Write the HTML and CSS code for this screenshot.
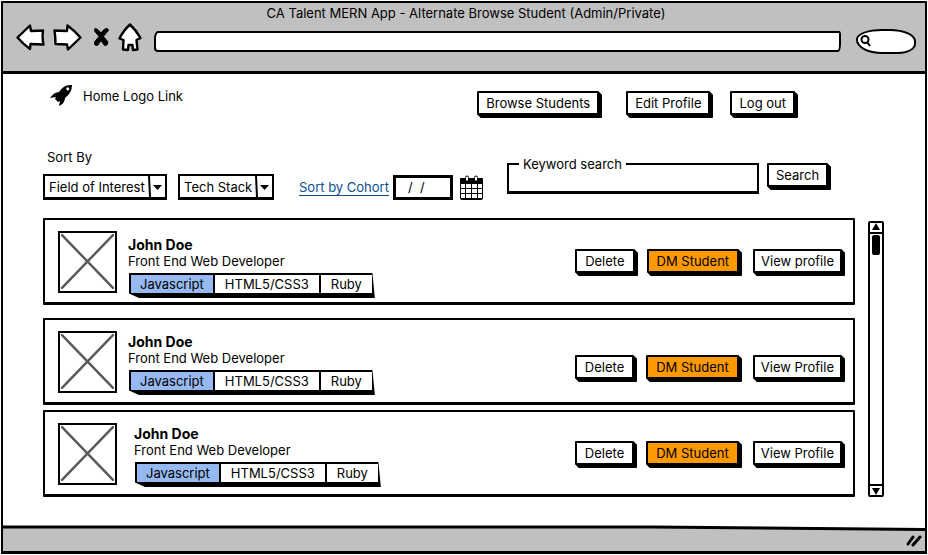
FILE: index.html
```html
<!DOCTYPE html>
<html lang="en">
<head>
<meta charset="utf-8">
<meta name="viewport" content="width=device-width, initial-scale=1">
<title>CA Talent MERN App</title>
<link rel="stylesheet" href="styles.css">
</head>
<body>
<svg class="defs" aria-hidden="true">
  <symbol id="placeholder" viewBox="0 0 54 57" preserveAspectRatio="none">
    <path d="M2 2 52 54M52 2 2 54" fill="none" stroke="#595959" stroke-width="2.4" stroke-linecap="round"/>
  </symbol>
</svg>
<div class="window">
  <header class="chrome">
    <h1 class="title">CA Talent MERN App - Alternate Browse Student (Admin/Private)</h1>
    <div class="toolbar">
      <button class="tool" aria-label="Back"><svg width="29" height="27" viewBox="0 0 29 27"><path d="M1.5 13.5 14 1.5 15 7 27 6.500Q26 14 27.500 20.500L14.500 20 14 25Q7 20 1.500 13.500Z"/></svg></button>
      <button class="tool tool-forward" aria-label="Forward"><svg width="29" height="27" viewBox="0 0 29 27"><path d="M1.500 6.500 14 7 14.500 1.500Q22 7 27.500 13.500L15 25.500 14 20.500 2.500 20Q2.500 13 1.500 6.500Z"/></svg></button>
      <button class="tool tool-stop" aria-label="Stop"><svg width="17" height="20" viewBox="0 0 17 20"><path class="solid" d="M2 1.500Q5 1.500 8 6 11 1 14.500 1.500L15.500 3.500Q13 6 10.500 9.500L15 15 14 18 11.500 18.500 8 13.500 5 18Q3 19 1.500 17.500L1.500 15 6 9.500 1.500 4Z"/></svg></button>
      <button class="tool tool-home" aria-label="Home"><svg width="24" height="29" viewBox="0 0 24 29"><path d="M12 1.500Q18 7 22.500 15L18.500 17 19.500 26.500 15 27 14.500 22 10.500 22 10 27 5 26.500 5.500 17 1.500 15.500Q5 8 12 1.500Z"/></svg></button>
      <input class="address" type="text" aria-label="Address">
      <div class="lookup">
        <svg width="11" height="12" viewBox="0 0 11 12" aria-hidden="true"><circle cx="5" cy="4.500" r="3.500"/><path d="m7 7 3 4"/></svg>
        <input type="text" aria-label="Web search">
      </div>
    </div>
  </header>

  <main class="page">
    <nav class="nav">
      <a class="logo" href="#">
        <svg width="23" height="23" viewBox="0 0 23 23" aria-hidden="true"><path fill-rule="evenodd" d="M22 1Q14 0 9 8 4 8 0 14L6 13 5 15 8 18 10 17 9 22Q15 19 15 14 22 9 22 1ZM19 4A1.500 1.500 0 1 1 16.500 5.800 1.500 1.500 0 0 1 19 4Z"/></svg>
        <span>Home Logo Link</span>
      </a>
      <div class="nav-actions">
        <button class="btn">Browse Students</button>
        <span class="account"><button class="btn">Edit Profile</button><button class="btn">Log out</button></span>
      </div>
    </nav>

    <form class="filters">
      <div class="sort">
        <span class="sort-label" id="sort">Sort By</span>
        <div class="sort-row">
          <div class="drop"><select class="drop-interest" aria-labelledby="sort"><option>Field of Interest</option></select><svg width="17" height="21" viewBox="0 0 17 21" aria-hidden="true"><path class="rule" d="M1 0 2 21"/><path d="M5 9H14L9.500 14Z"/></svg></div>
          <div class="drop"><select class="drop-stack" aria-labelledby="sort"><option>Tech Stack</option></select><svg width="17" height="21" viewBox="0 0 17 21" aria-hidden="true"><path class="rule" d="M1 0 2 21"/><path d="M5 9H14L9.500 14Z"/></svg></div>
          <a class="cohort" href="#">Sort by Cohort</a>
          <input class="date" type="text" value="/  /" aria-label="Cohort date">
          <svg class="calendar" width="23" height="25" viewBox="0 0 23 25" aria-hidden="true"><path d="M0 4Q0 3 1 3H22Q23 3 23 4V23Q23 25 21 25H2Q0 25 0 23Z"/><path class="cells" d="M1 9H5V13H1ZM6 9H11V13H6ZM12 9H17V13H12ZM18 9H22V13H18ZM1 14H5V18H1ZM6 14H11V18H6ZM12 14H17V18H12ZM18 14H22V18H18ZM1 19H5V23H1ZM6 19H11V23H6ZM12 19H17V23H12ZM18 19H22V23H18Z"/><path class="ring" d="M5.500 6V2.500a1.500 1.500 0 0 1 3 0V6ZM14.500 6V2.500a1.500 1.500 0 0 1 3 0V6Z"/></svg>
        </div>
      </div>
      <fieldset class="keyword">
        <legend><label for="keyword">Keyword search</label></legend>
        <input id="keyword" type="text">
      </fieldset>
      <button class="btn" type="button">Search</button>
    </form>

    <div class="results">
      <div class="list">
        <article class="card card-first">
          <svg class="photo" role="img" aria-label="Photo"><use href="#placeholder"/></svg>
          <div class="info">
            <h2>John Doe</h2>
            <p>Front End Web Developer</p>
            <ul class="tags"><li class="on">Javascript</li><li>HTML5/CSS3</li><li>Ruby</li></ul>
          </div>
          <div class="actions"><button class="btn">Delete</button><button class="btn btn-dm">DM Student</button><button class="btn btn-view">View profile</button></div>
        </article>
        <article class="card card-second">
          <svg class="photo" role="img" aria-label="Photo"><use href="#placeholder"/></svg>
          <div class="info">
            <h2>John Doe</h2>
            <p>Front End Web Developer</p>
            <ul class="tags"><li class="on">Javascript</li><li>HTML5/CSS3</li><li>Ruby</li></ul>
          </div>
          <div class="actions"><button class="btn">Delete</button><button class="btn btn-dm">DM Student</button><button class="btn btn-view">View Profile</button></div>
        </article>
        <article class="card card-third">
          <svg class="photo" role="img" aria-label="Photo"><use href="#placeholder"/></svg>
          <div class="info">
            <h2>John Doe</h2>
            <p>Front End Web Developer</p>
            <ul class="tags"><li class="on">Javascript</li><li>HTML5/CSS3</li><li>Ruby</li></ul>
          </div>
          <div class="actions"><button class="btn">Delete</button><button class="btn btn-dm">DM Student</button><button class="btn btn-view">View Profile</button></div>
        </article>
      </div>
      <div class="scroll" aria-hidden="true">
        <svg class="up" width="12" height="9" viewBox="0 0 12 9"><path d="M6 0 10 7H2Z"/></svg>
        <span class="thumb"></span>
        <svg class="down" width="12" height="9" viewBox="0 0 12 9"><path d="M2 2H10L6 9Z"/></svg>
      </div>
    </div>
  </main>

  <footer class="status">
    <svg class="edge" viewBox="0 0 922 6" preserveAspectRatio="none" aria-hidden="true"><path class="above" d="M0 0H922V5L650 2 0 1Z"/><path class="line" d="M0 2 650 2 922 4.500"/></svg>
    <svg class="grip" width="18" height="14" viewBox="0 0 18 14" aria-hidden="true"><path d="M3 11 8 4M8 12 15 4"/></svg>
  </footer>
</div>
</body>
</html>
```
FILE: styles.css
```css
* { box-sizing: border-box; }

body {
  margin: 0;
  padding: 1px;
  background: #fff;
  color: #000;
  font: 13px/16px Inter, "Liberation Sans", sans-serif;
}

button, input, select { font: inherit; color: inherit; }
h1, h2, p, ul { margin: 0; padding: 0; font-size: inherit; }
svg { display: block; }
.defs { position: absolute; width: 0; height: 0; }

.window {
  display: flex;
  flex-direction: column;
  min-height: calc(100vh - 2px);
  border: 2px solid #000;
  border-bottom-width: 3px;
}

/* Browser frame */
.chrome {
  padding: 2px 9px 18px 13px;
  background: #c0c0c0;
  border-bottom: 3px solid #000;
}
.title { font-weight: 400; text-align: center; }
.toolbar { display: flex; align-items: center; height: 32px; }
.tool { padding: 0; border: 0; background: none; }
.tool path { fill: #fff; stroke: #000; stroke-width: 2.4; stroke-linejoin: round; }
.tool .solid { fill: #000; stroke-width: 1; }
.tool-forward { margin-left: 8px; }
.tool-stop { margin-left: 11px; }
.tool-home { margin: 0 12px 0 8px; }
.address {
  flex: 1;
  min-width: 0;
  height: 21px;
  margin-top: 8px;
  border: 2px solid #000;
  border-radius: 4px 2px 3px 4px / 8px 4px 8px 4px;
  background: #fff;
}
.lookup {
  display: flex;
  align-items: center;
  width: 60px;
  height: 25px;
  margin: 8px 0 0 15px;
  padding-left: 2px;
  border: 2px solid #000;
  border-radius: 26px 26px 18px 26px / 10px 12px 10px 14px;
  background: #fff;
}
.lookup svg { flex: none; fill: none; stroke: #000; stroke-width: 2; }
.lookup input { width: 100%; min-width: 0; border: 0; padding: 0; background: none; }

/* Page */
.page { flex: 1; padding: 17px 41px 26px 40px; }
.btn {
  height: 24px;
  padding: 0 8px;
  border: 2px solid #000;
  border-radius: 1px;
  background: #fff;
  box-shadow: 1px 1px #000, 2px 2px #000, 3px 3px #000;
  line-height: 18px;
  white-space: nowrap;
}

.nav { display: flex; justify-content: space-between; align-items: flex-start; padding-right: 89px; }
.nav .btn { padding: 0 7px; }
.logo {
  display: flex;
  align-items: center;
  gap: 10px;
  margin: -7px 0 0 7px;
  color: inherit;
  text-decoration: none;
}
.nav-actions { display: flex; gap: 27px; }
.account { display: flex; gap: 20px; }

.filters { display: flex; align-items: flex-start; margin-top: 34px; }
.sort-label { display: block; padding-left: 4px; }
.sort-row { display: flex; align-items: center; margin-top: 9px; }
.drop { display: grid; align-items: stretch; margin-right: 11px; border: 2px solid #000; border-width: 2px 2px 3px; }
.drop select, .drop svg { grid-area: 1 / 1; }
.drop svg { justify-self: end; pointer-events: none; }
.drop .rule { stroke: #000; stroke-width: 2; }
.drop select { height: 21px; padding: 0 0 0 4px; border: 0; appearance: none; background: #fff; }
.drop-interest { width: 120px; }
.drop-stack { width: 92px; }
.cohort { margin: 0 4px 0 14px; border-bottom: 1px solid #0b4f91; color: #0b4f91; text-decoration: none; }
.date { width: 60px; height: 25px; padding: 0 0 0 12px; border: 3px solid #000; white-space: pre; }
.calendar { margin-left: 7px; }
.cells, .ring { fill: #fff; }
.ring { stroke: #000; stroke-width: 1; }

.keyword {
  flex: none;
  width: 252px;
  min-width: 0;
  margin: 7px 8px 0 24px;
  padding: 0 2px;
  border: 2px solid #000;
  border-bottom-width: 3px;
}
.keyword legend { margin-left: 8px; padding: 0 4px; }
.keyword input { width: 100%; height: 19px; padding: 0; border: 0; background: none; }
.filters > .btn { margin-top: 14px; padding: 0 7px; }

/* Students */
.results { display: flex; gap: 13px; margin-top: 18px; }
.list { flex: 1; min-width: 0; }
.card {
  display: flex;
  align-items: flex-start;
  height: 87px;
  padding: 11px 11px 0 13px;
  border: solid #000;
  border-width: 2px 2px 3px;
  border-radius: 1px;
}
.card-second { margin-top: 13px; }
.card-third { margin-top: 5px; }
.photo { flex: none; width: 59px; height: 62px; border: 2px solid #000; }
.info { margin: 3px 0 0 11px; }
.card-first .info { margin-top: 6px; }
.card-third .info { margin-left: 17px; }
.info h2 { font-size: 14px; font-weight: 700; }
.tags {
  display: flex;
  width: max-content;
  height: 25px;
  margin: 4px 0 0 1px;
  border: solid #000;
  border-width: 2px 3px 5px 2px;
  clip-path: polygon(0 0, 99% 0, 100% 100%, 10px 100%, 0 82%);
  line-height: 18px;
  list-style: none;
}
.tags li { padding: 0 9px; }
.tags li + li { padding: 0 10px; border-left: 2px solid #000; }
.tags .on { background: #96b9f1; }
.actions { display: flex; margin: 18px 0 0 auto; }
.card-second .actions { margin-top: 24px; }
.card-third .actions { margin-top: 18px; }
.btn-dm { margin: 0 14px 0 12px; background: #ff9900; }
.btn-view { padding: 0 6px; }

.scroll {
  display: flex;
  flex-direction: column;
  align-items: center;
  width: 16px;
  margin-top: 3px;
  border: 2px solid #000;
  border-radius: 2px;
}
.up { border-bottom: 2px solid #000; width: 12px; height: 11px; }
.down { border-top: 2px solid #000; width: 12px; height: 11px; }
.thumb { width: 8px; height: 20px; margin: 1px 0 auto; border-radius: 2px; background: #000; }

.status { height: 26px; background: #c0c0c0; }
.edge { width: 100%; height: 6px; }
.above { fill: #fff; }
.line { fill: none; stroke: #000; stroke-width: 3; }
.grip { margin: 2px 2px 0 auto; fill: none; stroke: #000; stroke-width: 3; stroke-linecap: round; }
```
